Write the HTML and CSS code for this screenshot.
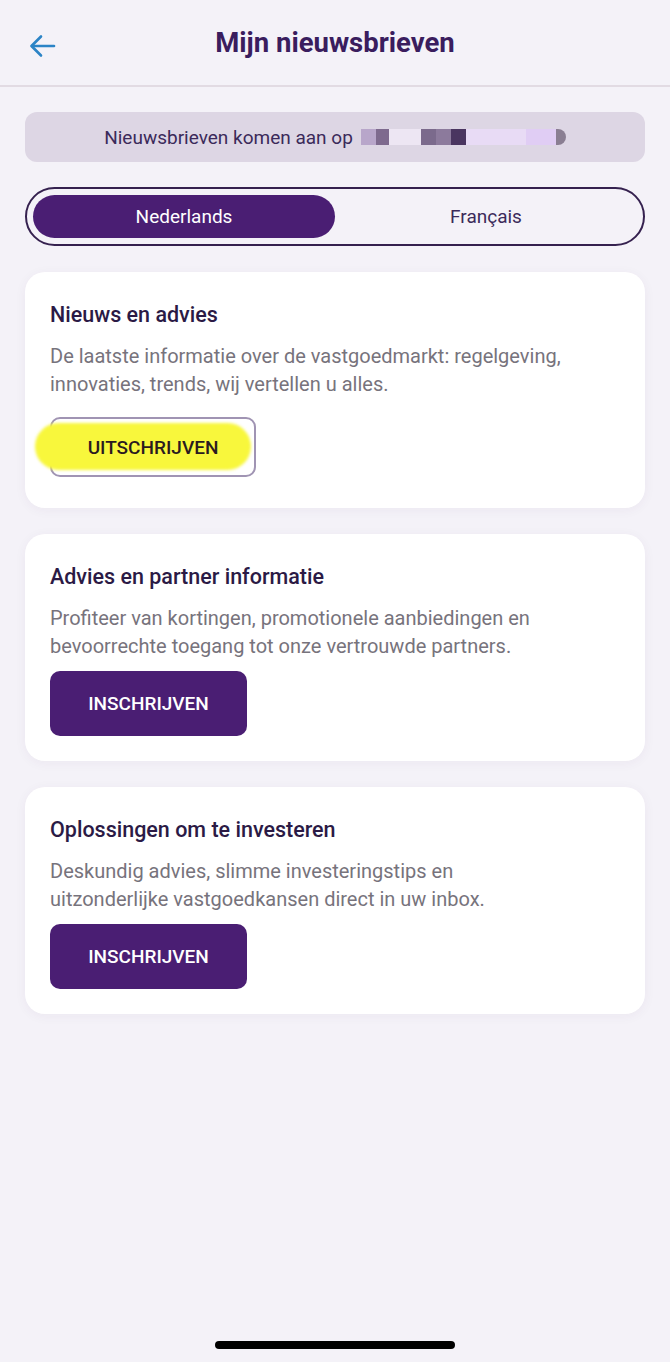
FILE: index.html
```html
<!DOCTYPE html>
<html lang="nl">
<head>
  <meta charset="UTF-8">
  <title>Mijn nieuwsbrieven</title>
  <link rel="stylesheet" href="styles.css">
</head>
<body>
  <div class="screen">
    <header class="topbar">
      <button class="back-btn" aria-label="Terug">
        <svg width="27" height="24" viewBox="0 0 27 24" fill="none" stroke="#2b84c6" stroke-width="2.6" stroke-linecap="round" stroke-linejoin="round">
          <path d="M25 12H3"/>
          <path d="M12 2.5L2.5 12l9.5 9.5"/>
        </svg>
      </button>
      <h1>Mijn nieuwsbrieven</h1>
    </header>

    <main class="content">
      <div class="notice">
        Nieuwsbrieven komen aan op <span class="email-blur"></span>
      </div>

      <div class="lang-toggle">
        <button class="lang-option active">Nederlands</button>
        <button class="lang-option">Français</button>
      </div>

      <section class="card">
        <h2>Nieuws en advies</h2>
        <p>De laatste informatie over de vastgoedmarkt: regelgeving, innovaties, trends, wij vertellen u alles.</p>
        <button class="btn btn-outline"><span>UITSCHRIJVEN</span></button>
      </section>

      <section class="card">
        <h2>Advies en partner informatie</h2>
        <p>Profiteer van kortingen, promotionele aanbiedingen en bevoorrechte toegang tot onze vertrouwde partners.</p>
        <button class="btn btn-primary">INSCHRIJVEN</button>
      </section>

      <section class="card">
        <h2>Oplossingen om te investeren</h2>
        <p>Deskundig advies, slimme investeringstips en<br>uitzonderlijke vastgoedkansen direct in uw inbox.</p>
        <button class="btn btn-primary">INSCHRIJVEN</button>
      </section>
    </main>

    <div class="home-indicator"></div>
  </div>
</body>
</html>
```

FILE: styles.css
```css
* {
  box-sizing: border-box;
}

body {
  margin: 0;
  font-family: Roboto, "Noto Sans", sans-serif;
  background-color: #f4f2f8;
  color: #2b1a45;
}

.screen {
  min-height: 1362px;
  display: flex;
  flex-direction: column;
}

.topbar {
  height: 87px;
  display: flex;
  align-items: center;
  justify-content: center;
  position: relative;
  border-bottom: 2px solid #e2dbe3;
}

.back-btn {
  position: absolute;
  left: 29px;
  top: 34px;
  padding: 0;
  border: none;
  background: none;
  line-height: 0;
}

.topbar h1 {
  margin: 0;
  font-size: 27.5px;
  font-weight: 700;
  color: #3a1d5e;
}

.content {
  padding: 25px 25px 0;
  display: flex;
  flex-direction: column;
}

.notice {
  height: 50px;
  border-radius: 12px;
  background: #ddd6e4;
  display: flex;
  align-items: center;
  justify-content: center;
  gap: 8px;
  font-size: 19px;
  color: #3b2a5a;
}

.email-blur {
  display: inline-block;
  width: 205px;
  height: 16px;
  border-radius: 0 8px 8px 0;
  background: linear-gradient(to right,
    #b8a6ca 0 15px, #7e6a8e 15px 28px, #ede6f3 28px 60px,
    #7b6a8c 60px 75px, #8c7a9c 75px 90px, #4a3560 90px 105px,
    #e8dbf5 105px 165px, #e0cdf4 165px 195px, #8a7e92 195px 205px);
}

.lang-toggle {
  margin-top: 25px;
  height: 59px;
  border: 2px solid #35214f;
  border-radius: 30px;
  padding: 6px;
  display: grid;
  grid-template-columns: 1fr 1fr;
}

.lang-option {
  border: none;
  background: none;
  border-radius: 22px;
  font-family: inherit;
  font-size: 19px;
  color: #3b2a5a;
}

.lang-option.active {
  background: #4a1e73;
  color: #fff;
}

.card {
  margin-top: 26px;
  background: #fff;
  border-radius: 20px;
  padding: 30px 25px 25px;
  box-shadow: 0 2px 12px rgba(70, 40, 100, 0.05);
}

.card h2 {
  margin: 0;
  font-size: 21.5px;
  line-height: 26px;
  font-weight: 500;
  color: #2b1a45;
}

.card p {
  margin: 14px 0 0;
  font-size: 20px;
  line-height: 28px;
  color: #77737c;
}

.btn {
  display: block;
  margin-top: 11px;
  width: 197px;
  height: 65px;
  border-radius: 10px;
  font-family: inherit;
  font-size: 19px;
  font-weight: 500;
}

.btn-primary {
  border: none;
  background: #4a1e73;
  color: #fff;
}

.btn-outline {
  margin-top: 19px;
  margin-bottom: 6px;
  width: 206px;
  height: 60px;
  border: 2px solid #a094b3;
  background: #fff;
  color: #2b1a20;
  position: relative;
}

.btn-outline span {
  position: relative;
}

/* marker highlight over the button */
.btn-outline::before {
  content: "";
  position: absolute;
  left: -17px;
  top: 4px;
  width: 216px;
  height: 47px;
  border-radius: 24px;
  background: #f8f73c;
  filter: blur(1.5px);
}

.home-indicator {
  margin: auto auto 13px;
  width: 240px;
  height: 8px;
  border-radius: 4px;
  background: #000;
}
```
